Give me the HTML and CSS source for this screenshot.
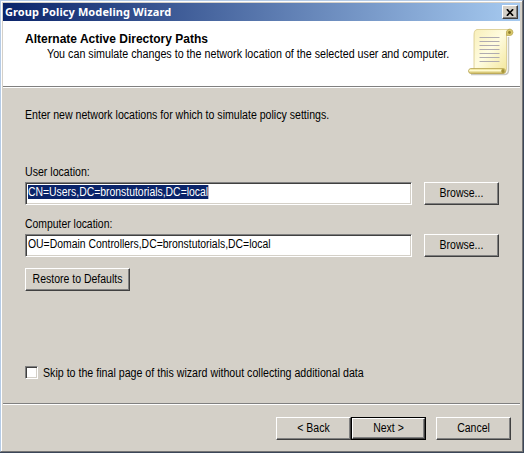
FILE: index.html
```html
<!DOCTYPE html>
<html lang="en">
<head>
<meta charset="utf-8">
<title>Group Policy Modeling Wizard</title>
<link rel="stylesheet" href="styles.css">
</head>
<body>
<div class="window">
  <div class="titlebar">
    <span class="title">Group Policy Modeling Wizard</span>
    <button class="close" aria-label="Close"><svg width="8" height="7" viewBox="0 0 8 7"><path d="M0.9 0.2L7.1 6.8M7.1 0.2L0.9 6.8" stroke="#000" stroke-width="1.7"/></svg></button>
  </div>
  <header class="header">
    <div class="heading">
      <h1>Alternate Active Directory Paths</h1>
      <p class="subtitle">You can simulate changes to the network location of the selected user and computer.</p>
    </div>
    <svg class="scroll" width="46" height="48" viewBox="0 0 46 48">
      <defs>
        <linearGradient id="paper" x1="0" y1="0" x2="1" y2="1"><stop offset="0" stop-color="#f8efba"/><stop offset=".45" stop-color="#fffce0"/><stop offset="1" stop-color="#f1e391"/></linearGradient>
        <linearGradient id="roll" x1="0" y1="0" x2="0" y2="1"><stop offset="0" stop-color="#e6d779"/><stop offset=".4" stop-color="#fffbd0"/><stop offset="1" stop-color="#c6b04b"/></linearGradient>
      </defs>
      <path d="M3 46.500H37Q40.500 46 40.500 42V9" fill="none" stroke="#c9c9c2" stroke-width="1.500"/>
      <path d="M9 1.500H42Q38 3 38.500 8V41Q38.500 45 35 45.500H6V7Q6 2 9 1.500Z" fill="url(#paper)" stroke="#d8c989" stroke-width=".8"/>
      <path d="M38.500 7.500V3.500Q39.500 1 42 1Q45 1.500 45 4.500Q44.500 7.500 42 7.500Z" fill="#d9c86b" stroke="#b5a34f" stroke-width=".7"/>
      <circle cx="41.500" cy="4.500" r="1.400" fill="#91812d"/>
      <path d="M11.500 9.500H31.500M11.500 13.500H31.500M11.500 17.500H31.500M11.500 21.500H31.500M11.500 25.500H31.500M11.500 29.500H31.500M11.500 33.500H31.500" stroke="#b0abb0"/>
      <path d="M2.500 40.500H35Q37.500 40.500 37.500 43T35 45.500H2.500Q.5 45 .5 43T2.500 40.500Z" fill="url(#roll)" stroke="#b9a656" stroke-width=".8"/>
      <ellipse cx="35" cy="43" rx="1.800" ry="2" fill="#a49336"/>
    </svg>
  </header>
  <main class="content">
    <p class="intro">Enter new network locations for which to simulate policy settings.</p>
    <label class="user-label">User location:</label>
    <div class="row">
      <div class="field"><span class="selected">CN=Users,DC=bronstutorials,DC=local</span></div>
      <button class="btn browse"><span>Browse...</span></button>
    </div>
    <label class="computer-label">Computer location:</label>
    <div class="row">
      <div class="field"><span class="value">OU=Domain Controllers,DC=bronstutorials,DC=local</span></div>
      <button class="btn browse"><span>Browse...</span></button>
    </div>
    <button class="btn restore"><span>Restore to Defaults</span></button>
    <div class="skip"><span class="checkbox"></span><span class="skip-text">Skip to the final page of this wizard without collecting additional data</span></div>
  </main>
  <footer class="footer">
    <button class="btn back"><span>&lt; Back</span></button>
    <div class="default"><button class="btn next"><span>Next &gt;</span></button></div>
    <button class="btn cancel"><span>Cancel</span></button>
  </footer>
</div>
</body>
</html>
```
FILE: styles.css
```css
* { box-sizing: border-box; }
body {
  margin: 0;
  width: 524px;
  height: 453px;
  overflow: hidden;
  background: #3b4658;
  font: 12px/14px "Liberation Sans", Arial, sans-serif;
  color: #000;
}
h1, p { margin: 0; }
.window {
  width: 523px;
  height: 452px;
  border: 1px solid #b5cbe6;
  border-right-color: #747474;
  border-bottom-color: #747474;
  box-shadow: inset 1px 1px #fff;
  padding: 2px 2px 0;
  background: #d4d0c8;
  display: flex;
  flex-direction: column;
}
.titlebar {
  height: 18px;
  display: flex;
  align-items: center;
  justify-content: space-between;
  padding: 0 2px;
  background: linear-gradient(90deg, #0a246a, #a6caf0);
}
.title {
  font: bold 11px/16px "Noto Sans", sans-serif;
  letter-spacing: 0.1px;
  color: #fff;
  white-space: nowrap;
}
button { padding: 0; font: inherit; color: inherit; white-space: nowrap; }
.close {
  width: 16px;
  height: 14px;
  display: flex;
  align-items: center;
  justify-content: center;
  background: #d4d0c8;
  border: 1px solid;
  border-color: #fff #404040 #404040 #fff;
  box-shadow: inset -1px -1px #808080;
}
.header {
  height: 66px;
  background: #fff;
  border-bottom: 1px solid #808080;
  display: flex;
  padding: 7px 6px 0 22px;
}
.heading { flex: 1; min-width: 0; padding-top: 4px; white-space: nowrap; }
.scroll { flex: none; }
h1 { font-size: 12px; line-height: 14px; }
.subtitle, .intro, label, .selected, .value, .skip-text {
  transform-origin: 0 50%;
  transform: scaleX(0.882);
}
.subtitle { margin: 1px -40px 0 22px; transform: scaleX(0.893); }
.content {
  height: 317px;
  border-top: 1px solid #fff;
  border-bottom: 1px solid #808080;
  padding: 20px 0 0 22px;
  white-space: nowrap;
}
label { display: block; }
.user-label { margin-top: 43px; }
.computer-label { margin-top: 12px; transform: scaleX(0.867); }
.row { display: flex; gap: 12px; margin-top: 3px; }
.field {
  width: 387px;
  height: 23px;
  background: #fff;
  border: 1px solid;
  border-color: #808080 #fff #fff #808080;
  box-shadow: inset 1px 1px #404040, inset -1px -1px #d4d0c8;
  padding: 2px;
}
.field span { display: inline-block; height: 14px; transform: scaleX(0.867); }
.field .selected { background: #0a246a; color: #fff; }
.btn {
  height: 23px;
  background: #d4d0c8;
  border: 1px solid;
  border-color: #fff #404040 #404040 #fff;
  box-shadow: inset -1px -1px #808080;
  padding-bottom: 2px;
}
.btn span { display: block; margin: 0 -10px; transform: scaleX(0.875); }
.browse { width: 75px; }
.restore { display: block; width: 105px; margin-top: 11px; }
.skip { display: flex; gap: 5px; margin-top: 75px; }
.skip-text { transform: scaleX(0.887); }
.checkbox {
  width: 13px;
  height: 13px;
  background: #fff;
  border: 1px solid;
  border-color: #808080 #fff #fff #808080;
  box-shadow: inset 1px 1px #404040, inset -1px -1px #d4d0c8;
}
.footer {
  border-top: 1px solid #fff;
  display: flex;
  justify-content: flex-end;
  padding: 12px 9px 0 0;
}
.back, .cancel { width: 75px; }
.default { border: 1px solid #000; width: 75px; height: 23px; margin-right: 10px; }
.next { display: block; width: 73px; height: 21px; }
```
